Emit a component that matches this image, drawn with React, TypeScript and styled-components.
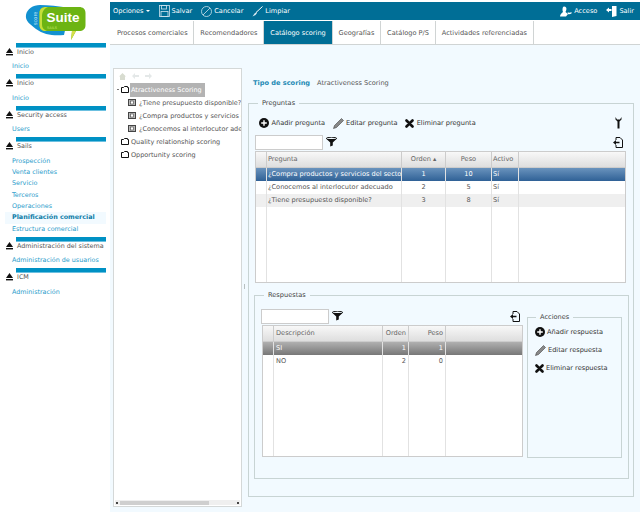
import React from "react";
import styled, { createGlobalStyle } from "styled-components";

const GlobalStyle = createGlobalStyle`
  html, body {
    margin: 0;
    padding: 0;
    background: #fff;
  }
  body {
    font-family: "DejaVu Sans", Verdana, sans-serif;
    font-size: 6.6px;
    color: #555;
  }
  svg {
    flex: none;
  }
`;

const Page = styled.div`
  width: 640px;
  height: 512px;
  display: flex;
  overflow: hidden;
`;

const Sidebar = styled.div`
  width: 110px;
  flex: none;
  background: #fff;
  font-size: 6.4px;
`;

const LogoBox = styled.div`
  height: 43px;
  padding: 3px 0 0 24px;
  box-sizing: border-box;
`;

const Section = styled.div`
  margin-bottom: 1.6px;
`;

const SectionBar = styled.div`
  margin-left: 16px;
  width: 90px;
  height: 5px;
  background: #0091c4;
  border-bottom: 1px solid #6cc0e0;
  box-sizing: border-box;
`;

const SectionHead = styled.div`
  display: flex;
  align-items: center;
  height: 8px;
  margin: 0 0 5.4px 6px;
  gap: 4px;
  color: #555;
  white-space: nowrap;
`;

const SideLink = styled.div<{ $active?: boolean }>`
  height: 11.4px;
  line-height: 11px;
  margin-left: 5px;
  margin-right: 4px;
  padding-left: 7px;
  color: ${(p) => (p.$active ? "#0d7ca8" : "#2a9ccb")};
  font-weight: ${(p) => (p.$active ? "bold" : "normal")};
  background: ${(p) => (p.$active ? "#f2faff" : "transparent")};
  white-space: nowrap;
`;

const Main = styled.div`
  flex: 1;
  display: flex;
  flex-direction: column;
  min-width: 0;
  padding-top: 2px;
`;

const TopBar = styled.div`
  height: 18px;
  background: #006e96;
  color: #fff;
  display: flex;
  align-items: center;
  padding: 0 0 0 3px;
  flex: none;
`;

const TopItem = styled.div`
  display: flex;
  align-items: center;
  gap: 2px;
  margin-right: 9px;
  white-space: nowrap;
`;

const TopRight = styled.div`
  margin-left: auto;
  display: flex;
  ${TopItem}:last-child {
    margin-right: 6px;
  }
`;

const Tabs = styled.div`
  display: flex;
  height: 23px;
  margin-top: 1px;
  padding-left: 1px;
  flex: none;
  border-bottom: 1px solid #d0d4d4;
`;

const Tab = styled.div<{ $active?: boolean }>`
  display: flex;
  align-items: center;
  padding: 0 5.9px;
  border-right: 1px solid #d0d4d4;
  white-space: nowrap;
  background: ${(p) => (p.$active ? "#006e96" : "#fff")};
  color: ${(p) => (p.$active ? "#fff" : "#555")};
`;

const Content = styled.div`
  flex: 1;
  display: flex;
  background: #f2faff;
  padding: 23px 0 5px 3px;
  min-height: 0;
`;

const TreePanel = styled.div`
  width: 129px;
  flex: none;
  background: #fff;
  border: 1px solid #d4d8d8;
  box-sizing: border-box;
  display: flex;
  flex-direction: column;
  overflow: hidden;
`;

const TreeTools = styled.div`
  height: 14px;
  display: flex;
  align-items: center;
  gap: 6px;
  padding-left: 5px;
  flex: none;
`;

const TreeBody = styled.div`
  flex: 1;
  font-size: 6.5px;
`;

const TreeRow = styled.div<{ $indent?: boolean }>`
  height: 13px;
  display: flex;
  align-items: center;
  gap: ${(p) => (p.$indent ? "3px" : "2px")};
  padding-left: ${(p) => (p.$indent ? "14px" : "7px")};
  white-space: nowrap;
  color: #555;
`;

const TreeToggle = styled.span`
  width: 2px;
  height: 1px;
  background: #777;
  margin-left: -4px;
  margin-right: 0;
`;

const TreeLabel = styled.span<{ $selected?: boolean }>`
  background: ${(p) => (p.$selected ? "#b3b3b3" : "transparent")};
  color: ${(p) => (p.$selected ? "#fff" : "#555")};
  padding: ${(p) => (p.$selected ? "3px 3px 3px 1px" : "0")};
  margin-left: ${(p) => (p.$selected ? "-1px" : "0")};
`;

const TreeScroll = styled.div`
  height: 5px;
  margin: 0 1px 1px 1px;
  background: #efefef;
  display: flex;
  align-items: center;
  flex: none;
`;

const ScrollEnd = styled.span<{ $last?: boolean }>`
  width: 2px;
  height: 2px;
  background: #444;
  margin: ${(p) => (p.$last ? "0 1px 0 auto" : "0 1px")};
  flex: none;
`;

const ScrollThumb = styled.span`
  width: 89px;
  height: 4px;
  background: #cfcfcf;
  margin-left: 1px;
`;

const Splitter = styled.div`
  width: 6px;
  flex: none;
  display: flex;
  align-items: center;
  justify-content: center;
  &::before {
    content: "";
    width: 1px;
    height: 5px;
    margin-left: -1px;
    margin-top: -2px;
    background: #b8c0c0;
  }
`;

const RightPane = styled.div`
  flex: 1;
  min-width: 0;
  margin-right: 6px;
  display: flex;
  flex-direction: column;
  padding-bottom: 10px;
`;

const ScoringType = styled.div`
  height: 26px;
  display: flex;
  align-items: center;
  gap: 7px;
  padding: 4px 0 0 5px;
  box-sizing: border-box;
  margin-bottom: 5px;
  flex: none;
`;

const ScoringLabel = styled.span`
  color: #1f8ab5;
  font-weight: bold;
`;

const ScoringValue = styled.span`
  color: #555;
`;

const Field = styled.fieldset`
  border: 1px solid #c8d4d4;
  margin: 0;
  min-width: 0;
  box-sizing: border-box;
`;

const Legend = styled.legend`
  padding: 0 4px;
  margin-left: 4px;
  color: #444;
  line-height: 9px;
`;

const OuterField = styled(Field)`
  flex: 1;
  padding: 0 5px 17px 5px;
  display: flex;
  flex-direction: column;
`;

const Toolbar = styled.div`
  height: 22px;
  display: flex;
  align-items: center;
  gap: 7.5px;
  margin: 4px 2px 0 2px;
  padding-left: 3px;
  flex: none;
`;

const ToolButton = styled.div`
  display: flex;
  align-items: center;
  gap: 2.5px;
  color: #333;
  white-space: nowrap;
`;

const ToolEnd = styled.div`
  margin-left: auto;
  margin-right: 4px;
  display: flex;
`;

const FilterRow = styled.div<{ $answers?: boolean }>`
  height: 16px;
  display: flex;
  align-items: center;
  gap: 3px;
  flex: none;
  margin: ${(p) => (p.$answers ? "0 0 1px -1px" : "0 2px 1px 1px")};
`;

const FilterInput = styled.div`
  height: 15px;
  width: 68px;
  background: #fff;
  border: 1px solid #ccc;
  box-sizing: border-box;
`;

const FilterEnd = styled.div`
  margin-left: auto;
  margin-right: 3px;
  display: flex;
`;

const Grid = styled.div<{ $height: number; $question?: boolean }>`
  height: ${(p) => p.$height}px;
  width: ${(p) => (p.$question ? "371px" : "auto")};
  margin-left: ${(p) => (p.$question ? "1px" : "0")};
  background: #fff;
  border: 1px solid #ccc;
  box-sizing: border-box;
  display: flex;
  flex-direction: column;
  flex: none;
`;

const GridRow = styled.div<{ $cols: string; $kind?: string }>`
  display: grid;
  grid-template-columns: ${(p) => p.$cols};
  height: 13px;
  line-height: 12px;
  flex: none;
  color: ${(p) => (p.$kind === "blue" || p.$kind === "grey" ? "#fff" : "#555")};
  background: ${(p) =>
    p.$kind === "blue"
      ? "linear-gradient(#6a93bd, #2f6196)"
      : p.$kind === "grey"
      ? "linear-gradient(#b0b0b0, #777)"
      : p.$kind === "odd"
      ? "#efefef"
      : "transparent"};
`;

const GridHead = styled(GridRow)`
  height: 16px;
  line-height: 15px;
  background: linear-gradient(#f8f8f8, #dedede);
  border-bottom: 1px solid #ccc;
  box-sizing: border-box;
  color: #666;
`;

const GridFill = styled(GridRow)`
  flex: 1;
`;

const Cell = styled.div<{ $align?: string; $pad?: number }>`
  border-right: 1px solid #e2e2e2;
  text-align: ${(p) => p.$align || "left"};
  padding: 0 ${(p) => p.$pad ?? 1}px;
  overflow: hidden;
  white-space: nowrap;
  min-width: 0;
`;

const HeadCell = styled(Cell)`
  border-right: 1px solid #ccc;
`;

const InnerField = styled(Field)`
  margin: 8px 0 0 0;
  width: 375px;
  height: 188px;
  padding: 0 5px 0 7px;
  display: flex;
  legend {
    margin-left: 2px;
  }
`;

const AnswersArea = styled.div`
  width: 261px;
  flex: none;
  padding-top: 8px;
`;

const ActionsField = styled(Field)`
  width: 95px;
  height: 145px;
  margin: 13px 0 0 4px;
  padding: 1px 0 0 7px;
  flex: none;
  legend {
    margin-left: 1px;
  }
`;

const ActionRow = styled.div`
  display: flex;
  align-items: center;
  gap: 2px;
  height: 18px;
  color: #333;
  white-space: nowrap;
`;

const Eject = () => (
  <svg width="7" height="8" viewBox="0 0 7 8">
    <path d="M3.5 0 L7 5 H0 Z" fill="#111" />
    <rect x="0" y="6" width="7" height="1.4" fill="#111" />
  </svg>
);

const Folder = () => (
  <svg width="8" height="7" viewBox="0 0 8 7" fill="none" stroke="#111">
    <path d="M.5 6.5V1.5h2l1-1h3v1h1v5z" />
  </svg>
);

const Doc = () => (
  <svg width="8" height="7" viewBox="0 0 8 7">
    <rect x=".5" y=".5" width="7" height="6" fill="#bbb" stroke="#444" />
    <rect x="2.5" y="2" width="3" height="3" fill="#fff" stroke="#444" strokeWidth=".6" />
  </svg>
);

const Funnel = () => (
  <svg width="11" height="10" viewBox="0 0 11 10">
    <ellipse cx="5.5" cy="1.4" rx="5.2" ry="1.2" fill="none" stroke="#111" />
    <path d="M.5 2 L4.2 5.6V9.6L6.8 8.4V5.6L10.5 2Z" fill="#111" />
  </svg>
);

const Plus = () => (
  <svg width="10" height="10" viewBox="0 0 10 10">
    <circle cx="5" cy="5" r="5" fill="#111" />
    <path d="M5 2.2v5.6M2.2 5h5.6" stroke="#fff" strokeWidth="1.4" />
  </svg>
);

const Pencil = () => (
  <svg width="11" height="11" viewBox="0 0 11 11">
    <path d="M0.5 10.5 L1.5 7.5 L8.5 0.5 L10.5 2.5 L3.5 9.5Z" fill="#888" stroke="#444" strokeWidth=".6" />
  </svg>
);

const Cross = () => (
  <svg width="9" height="9" viewBox="0 0 9 9">
    <path d="M1.5 1.5 L7.5 7.5M7.5 1.5 L1.5 7.5" stroke="#111" strokeWidth="2.6" strokeLinecap="round" />
  </svg>
);

const Wrench = () => (
  <svg width="7" height="12" viewBox="0 0 7 12">
    <path d="M.5 0V2.5L2.5 4.5V11.5H4.5V4.5L6.5 2.5V0L5 2.4H2L.5 0Z" fill="#111" />
  </svg>
);

const ExitDoc = () => (
  <svg width="10" height="11" viewBox="0 0 10 11" fill="none">
    <path d="M3 3V.5H7L9.5 3V10.5H3V8" stroke="#111" />
    <path d="M0 5.5L3 3V4.7H6.5V6.3H3V8Z" fill="#111" />
  </svg>
);

const Save = () => (
  <svg width="11" height="12" viewBox="0 0 11 12" fill="none" stroke="#cfe4ee" strokeWidth=".8">
    <rect x=".5" y=".5" width="10" height="11" />
    <rect x="2.5" y=".5" width="5" height="3.5" />
    <rect x="2" y="6.5" width="7" height="5" />
  </svg>
);

const Cancel = () => (
  <svg width="11" height="11" viewBox="0 0 11 11" fill="none" stroke="#cfe4ee" strokeWidth=".8">
    <circle cx="5.5" cy="5.5" r="5" />
    <path d="M2 9L9 2" />
  </svg>
);

const Brush = () => (
  <svg width="11" height="11" viewBox="0 0 11 11" fill="none">
    <path d="M10.5.5L4 6.5" stroke="#fff" strokeWidth="1" />
    <path d="M4.5 6L2.5 7.5 .5 10.5 3.5 9 5 7Z" fill="#dcebf2" />
  </svg>
);

const User = () => (
  <svg width="12" height="11" viewBox="0 0 12 11" fill="#fff">
    <path d="M4 0.5C6 0.5 6.8 2 6.3 4L5.5 6 8 8 6 10.5H0C0 8 2 7 3 6 2.3 4.5 2.2 1 4 .5Z" />
    <path d="M7.5 6.5C9 6.5 10 7 11.5 6V7.5C10.5 8 9 8.5 8 8Z" />
  </svg>
);

const ExitWhite = () => (
  <svg width="11" height="11" viewBox="0 0 11 11" fill="#fff">
    <path d="M6 0H10.5V10L6 11Z" />
    <path d="M0 4L3 1.5V3H5.5V5H3V6.5Z" />
  </svg>
);

const Caret = () => (
  <svg width="4" height="2" viewBox="0 0 4 2">
    <path d="M0 0H4L2 2Z" fill="#fff" />
  </svg>
);

const PaleArrow = ({ flip }: { flip?: boolean }) => (
  <svg width="7" height="6" viewBox="0 0 7 6">
    <path d={flip ? "M7 3L4 0V2H0V4H4V6Z" : "M0 3L3 0V2H7V4H3V6Z"} fill="#e4e8e8" />
  </svg>
);

const PaleHome = () => (
  <svg width="7" height="7" viewBox="0 0 7 7">
    <path d="M3.5 0L7 3.5H6V7H1V3.5H0Z" fill="#d8dcd0" />
  </svg>
);

const Logo = () => (
  <svg width="62" height="38" viewBox="0 0 62 38">
    <path
      d="M2 12C3 6 9 2 16 2C24 2 34 3 46 5L40 32C30 33 20 32 12 26C6 21 1 18 2 12Z"
      fill="#1291d0"
    />
    <path
      d="M15.5 10C15.5 6 18 4 22 4H55C59 4 61.5 6 61.5 10V22C61.5 26 59 28 55 28H52L47 37 48 28H22C18 28 15.5 26 15.5 22Z"
      fill="#6cb413"
    />
    <path
      d="M15.5 10C15.5 6 18 4 22 4H24C19 6 18 10 18 14V22C18 25 20 27 23 28H22C18 28 15.5 26 15.5 22Z"
      fill="#c4de3a"
    />
    <path d="M52 28L47 37 48 28Z" fill="#d6e04a" />
    <text x="22.5" y="19" fill="#fff" fontSize="13.5" fontFamily="Liberation Sans" fontWeight="bold">
      Suite
    </text>
    <text x="23" y="26" fill="#c6e66a" fontSize="3.5" fontFamily="DejaVu Sans">
      SAILS
    </text>
    <text x="-22" y="13" fill="#cde9f7" fontSize="5" fontFamily="DejaVu Sans" transform="rotate(-90)">
      score
    </text>
  </svg>
);

const nav = [
  { title: "Inicio", links: ["Inicio"] },
  { title: "Inicio", links: ["Inicio"] },
  { title: "Security access", links: ["Users"] },
  {
    title: "Sails",
    links: [
      "Prospección",
      "Venta clientes",
      "Servicio",
      "Terceros",
      "Operaciones",
      "Planificación comercial",
      "Estructura comercial",
    ],
  },
  { title: "Administración del sistema", links: ["Administración de usuarios"] },
  { title: "ICM", links: ["Administración"] },
];

const questionCols = "11px 135px 44px 46px 27px 1fr";
const answerCols = "11px 109px 26px 37px 1fr";

const questions = [
  { text: "¿Compra productos y servicios del sector", order: "1", weight: "10", kind: "blue" },
  { text: "¿Conocemos al interlocutor adecuado", order: "2", weight: "5", kind: "" },
  { text: "¿Tiene presupuesto disponible?", order: "3", weight: "8", kind: "odd" },
];

const answers = [
  { text: "SI", order: "1", weight: "1", kind: "grey" },
  { text: "NO", order: "2", weight: "0", kind: "" },
];

export default function App() {
  return (
    <>
      <GlobalStyle />
      <Page>
        <Sidebar>
          <LogoBox>
            <Logo />
          </LogoBox>
          {nav.map((section, i) => (
            <Section key={i}>
              <SectionBar />
              <SectionHead>
                <Eject />
                {section.title}
              </SectionHead>
              {section.links.map((link) => (
                <SideLink key={link} $active={link === "Planificación comercial"}>
                  {link}
                </SideLink>
              ))}
            </Section>
          ))}
        </Sidebar>
        <Main>
          <TopBar>
            <TopItem>
              Opciones <Caret />
            </TopItem>
            <TopItem>
              <Save /> Salvar
            </TopItem>
            <TopItem>
              <Cancel /> Cancelar
            </TopItem>
            <TopItem>
              <Brush /> Limpiar
            </TopItem>
            <TopRight>
              <TopItem>
                <User /> Acceso
              </TopItem>
              <TopItem>
                <ExitWhite /> Salir
              </TopItem>
            </TopRight>
          </TopBar>
          <Tabs>
            <Tab>Procesos comerciales</Tab>
            <Tab>Recomendadores</Tab>
            <Tab $active>Catálogo scoring</Tab>
            <Tab>Geografías</Tab>
            <Tab>Catálogo P/S</Tab>
            <Tab>Actividades referenciadas</Tab>
          </Tabs>
          <Content>
            <TreePanel>
              <TreeTools>
                <PaleHome />
                <PaleArrow />
                <PaleArrow flip />
              </TreeTools>
              <TreeBody>
                <TreeRow>
                  <TreeToggle />
                  <Folder />
                  <TreeLabel $selected>Atractiveness Scoring</TreeLabel>
                </TreeRow>
                <TreeRow $indent>
                  <Doc />
                  <TreeLabel>¿Tiene presupuesto disponible?</TreeLabel>
                </TreeRow>
                <TreeRow $indent>
                  <Doc />
                  <TreeLabel>¿Compra productos y servicios del sector</TreeLabel>
                </TreeRow>
                <TreeRow $indent>
                  <Doc />
                  <TreeLabel>¿Conocemos al interlocutor adecuado</TreeLabel>
                </TreeRow>
                <TreeRow>
                  <Folder />
                  <TreeLabel>Quality relationship scoring</TreeLabel>
                </TreeRow>
                <TreeRow>
                  <Folder />
                  <TreeLabel>Opportunity scoring</TreeLabel>
                </TreeRow>
              </TreeBody>
              <TreeScroll>
                <ScrollEnd />
                <ScrollThumb />
                <ScrollEnd $last />
              </TreeScroll>
            </TreePanel>
            <Splitter />
            <RightPane>
              <ScoringType>
                <ScoringLabel>Tipo de scoring</ScoringLabel>
                <ScoringValue>Atractiveness Scoring</ScoringValue>
              </ScoringType>
              <OuterField>
                <Legend>Preguntas</Legend>
                <Toolbar>
                  <ToolButton>
                    <Plus /> Añadir pregunta
                  </ToolButton>
                  <ToolButton>
                    <Pencil /> Editar pregunta
                  </ToolButton>
                  <ToolButton>
                    <Cross /> Eliminar pregunta
                  </ToolButton>
                  <ToolEnd>
                    <Wrench />
                  </ToolEnd>
                </Toolbar>
                <FilterRow>
                  <FilterInput />
                  <Funnel />
                  <FilterEnd>
                    <ExitDoc />
                  </FilterEnd>
                </FilterRow>
                <Grid $height={132} $question>
                  <GridHead $cols={questionCols}>
                    <HeadCell />
                    <HeadCell>Pregunta</HeadCell>
                    <HeadCell $align="center">Orden ▴</HeadCell>
                    <HeadCell $align="center">Peso</HeadCell>
                    <HeadCell>Activo</HeadCell>
                    <div />
                  </GridHead>
                  {questions.map((q) => (
                    <GridRow key={q.order} $cols={questionCols} $kind={q.kind}>
                      <Cell />
                      <Cell>{q.text}</Cell>
                      <Cell $align="center">{q.order}</Cell>
                      <Cell $align="center">{q.weight}</Cell>
                      <Cell>Sí</Cell>
                      <div />
                    </GridRow>
                  ))}
                  <GridFill $cols={questionCols}>
                    <Cell />
                    <Cell />
                    <Cell />
                    <Cell />
                    <Cell />
                    <div />
                  </GridFill>
                </Grid>
                <InnerField>
                  <Legend>Respuestas</Legend>
                  <AnswersArea>
                    <FilterRow $answers>
                      <FilterInput />
                      <Funnel />
                      <FilterEnd>
                        <ExitDoc />
                      </FilterEnd>
                    </FilterRow>
                    <Grid $height={132}>
                      <GridHead $cols={answerCols}>
                        <HeadCell />
                        <HeadCell $pad={2}>Descripción</HeadCell>
                        <HeadCell $align="right" $pad={2}>Orden</HeadCell>
                        <HeadCell $align="right" $pad={2}>Peso</HeadCell>
                        <div />
                      </GridHead>
                      {answers.map((a) => (
                        <GridRow key={a.order} $cols={answerCols} $kind={a.kind}>
                          <Cell />
                          <Cell $pad={2}>{a.text}</Cell>
                          <Cell $align="right" $pad={2}>{a.order}</Cell>
                          <Cell $align="right" $pad={2}>{a.weight}</Cell>
                          <div />
                        </GridRow>
                      ))}
                      <GridFill $cols={answerCols}>
                        <Cell />
                        <Cell />
                        <Cell />
                        <Cell />
                        <div />
                      </GridFill>
                    </Grid>
                  </AnswersArea>
                  <ActionsField>
                    <Legend>Acciones</Legend>
                    <ActionRow>
                      <Plus /> Añadir respuesta
                    </ActionRow>
                    <ActionRow>
                      <Pencil /> Editar respuesta
                    </ActionRow>
                    <ActionRow>
                      <Cross /> Eliminar respuesta
                    </ActionRow>
                  </ActionsField>
                </InnerField>
              </OuterField>
            </RightPane>
          </Content>
        </Main>
      </Page>
    </>
  );
}
